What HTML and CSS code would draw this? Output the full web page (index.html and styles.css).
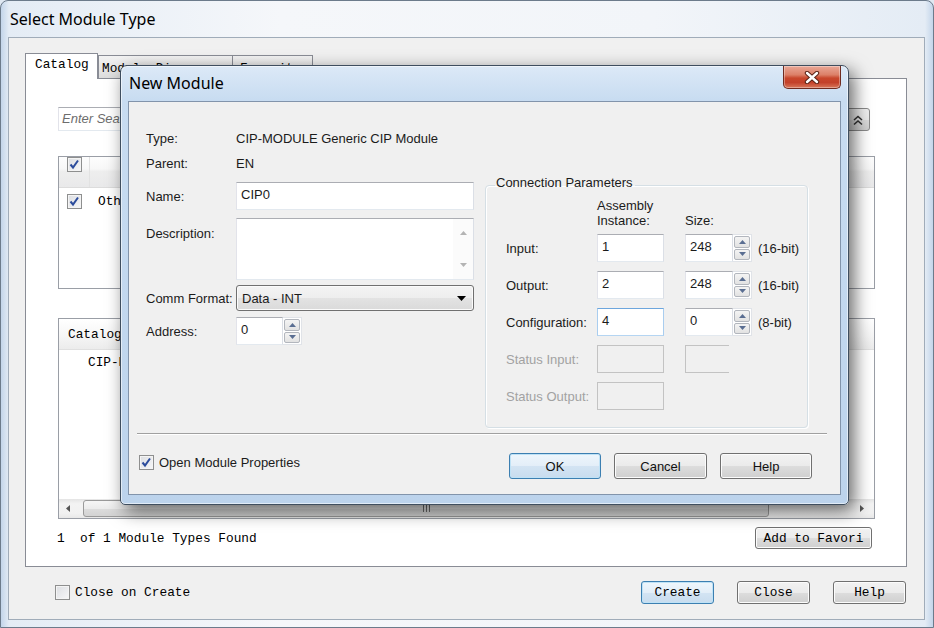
FILE: index.html
```html
<!DOCTYPE html>
<html lang="en">
<head>
<meta charset="utf-8">
<title>Select Module Type</title>
<link rel="stylesheet" href="styles.css">
</head>
<body>
<div class="win">
  <div class="win-title">Select Module Type</div>
  <div class="win-client">
    <div class="tabs">
      <div class="tab tab-on mono">Catalog</div>
      <div class="tab tab-2 mono">Module Discovery</div>
      <div class="tab tab-3 mono">Favorites</div>
    </div>
    <div class="panel">
      <div class="search-row">
        <div class="search-box">Enter Search Text for Module Type...</div>
        <div class="collapse-btn"><svg width="12" height="12" viewBox="0 0 12 12"><path d="M2 6l4-3.5 4 3.5M2 10.5l4-3.5 4 3.5" fill="none" stroke="#333" stroke-width="1.6"/></svg></div>
      </div>
      <div class="list list-filter">
        <div class="lhead lhead-filter">
          <span class="chk"><svg width="13" height="13" viewBox="0 0 13 13"><path d="M2.5 6.5l2.5 3 5-7" fill="none" stroke="#2c4c9c" stroke-width="2"/></svg></span>
          <span class="lhead-div"></span>
        </div>
        <div class="lrow lrow-filter">
          <span class="chk"><svg width="13" height="13" viewBox="0 0 13 13"><path d="M2.5 6.5l2.5 3 5-7" fill="none" stroke="#2c4c9c" stroke-width="2"/></svg></span>
          <span class="mono">Other</span>
        </div>
      </div>
      <div class="list list-cat">
        <div class="lhead lhead-cat mono">Catalog Number</div>
        <div class="lrow lrow-cat mono">CIP-MODULE</div>
        <div class="lfill"></div>
        <div class="hscroll">
          <span class="harrow"><svg width="4" height="7" viewBox="0 0 4 7"><path d="M4 0L0 3.5 4 7z" fill="#555"/></svg></span>
          <span class="hthumb"><span class="grip"></span></span>
          <span class="htrack"></span>
          <span class="harrow harrow-r"><svg width="4" height="7" viewBox="0 0 4 7"><path d="M0 0l4 3.5L0 7z" fill="#555"/></svg></span>
        </div>
      </div>
      <div class="found-row">
        <span class="mono">1  of 1 Module Types Found</span>
        <button class="obtn obtn-fav">Add to Favori</button>
      </div>
    </div>
    <div class="win-foot">
      <div class="ochk"><span class="chk"></span><span class="mono">Close on Create</span></div>
      <div class="obtns">
        <button class="obtn obtn-def">Create</button>
        <button class="obtn">Close</button>
        <button class="obtn">Help</button>
      </div>
    </div>
  </div>
</div>

<div class="dlg">
  <div class="dlg-title">
    <span class="dlg-caption">New Module</span>
    <span class="dlg-close"><svg width="16" height="13" viewBox="0 0 16 13"><path d="M3 2l10 9M13 2L3 11" stroke="#5a2418" stroke-width="4.4" stroke-linecap="round"/><path d="M3 2l10 9M13 2L3 11" stroke="#fff" stroke-width="2.4" stroke-linecap="round"/></svg></span>
  </div>
  <div class="dlg-client">
    <div class="dlg-body">
      <div class="fcol">
        <div class="frow r-type"><span class="lbl">Type:</span><span>CIP-MODULE Generic CIP Module</span></div>
        <div class="frow r-parent"><span class="lbl">Parent:</span><span>EN</span></div>
        <div class="frow r-name"><span class="lbl">Name:</span><span class="tb tb-name">CIP0</span></div>
        <div class="frow r-desc"><span class="lbl">Description:</span>
          <span class="desc"><span class="desc-text"></span><span class="vscroll"><svg width="7" height="4" viewBox="0 0 7 4"><path d="M0 4L3.5 0 7 4z" fill="#b4b4b4"/></svg><svg width="7" height="4" viewBox="0 0 7 4"><path d="M0 0h7L3.5 4z" fill="#b4b4b4"/></svg></span></span>
        </div>
        <div class="frow r-comm"><span class="lbl">Comm Format:</span>
          <span class="combo"><span>Data - INT</span><svg width="9" height="5" viewBox="0 0 9 5"><path d="M0 0h9L4.5 5z" fill="#000"/></svg></span>
        </div>
        <div class="frow r-addr"><span class="lbl">Address:</span>
          <span class="spinbox spinbox-addr"><span class="tb">0</span><span class="spin"><span class="sb"><svg width="7" height="4" viewBox="0 0 7 4"><path d="M0 4L3.5 0 7 4z" fill="#5a6e92"/></svg></span><span class="sb"><svg width="7" height="4" viewBox="0 0 7 4"><path d="M0 0h7L3.5 4z" fill="#5a6e92"/></svg></span></span></span>
        </div>
      </div>
      <fieldset class="conn">
        <legend>Connection Parameters</legend>
        <div class="cgrid">
          <span></span><span class="chead">Assembly<br>Instance:</span><span class="chead chead-size">Size:</span><span></span>

          <span class="clbl">Input:</span><span class="tb tb-inst">1</span>
          <span class="spinbox"><span class="tb">248</span><span class="spin"><span class="sb"><svg width="7" height="4" viewBox="0 0 7 4"><path d="M0 4L3.5 0 7 4z" fill="#5a6e92"/></svg></span><span class="sb"><svg width="7" height="4" viewBox="0 0 7 4"><path d="M0 0h7L3.5 4z" fill="#5a6e92"/></svg></span></span></span>
          <span class="unit">(16-bit)</span>

          <span class="clbl">Output:</span><span class="tb tb-inst">2</span>
          <span class="spinbox"><span class="tb">248</span><span class="spin"><span class="sb"><svg width="7" height="4" viewBox="0 0 7 4"><path d="M0 4L3.5 0 7 4z" fill="#5a6e92"/></svg></span><span class="sb"><svg width="7" height="4" viewBox="0 0 7 4"><path d="M0 0h7L3.5 4z" fill="#5a6e92"/></svg></span></span></span>
          <span class="unit">(16-bit)</span>

          <span class="clbl">Configuration:</span><span class="tb tb-inst tb-focus">4</span>
          <span class="spinbox"><span class="tb">0</span><span class="spin"><span class="sb"><svg width="7" height="4" viewBox="0 0 7 4"><path d="M0 4L3.5 0 7 4z" fill="#5a6e92"/></svg></span><span class="sb"><svg width="7" height="4" viewBox="0 0 7 4"><path d="M0 0h7L3.5 4z" fill="#5a6e92"/></svg></span></span></span>
          <span class="unit">(8-bit)</span>

          <span class="clbl dis">Status Input:</span><span class="tb tb-inst tb-dis"></span>
          <span class="tb tb-dis tb-cut"></span><span></span>

          <span class="clbl dis">Status Output:</span><span class="tb tb-inst tb-dis"></span>
          <span></span><span></span>
        </div>
      </fieldset>
    </div>
    <div class="sep"></div>
    <div class="dlg-foot">
      <div class="dchk"><span class="chk"><svg width="13" height="13" viewBox="0 0 13 13"><path d="M2.5 6.5l2.5 3 5-7" fill="none" stroke="#2c4c9c" stroke-width="2"/></svg></span><span>Open Module Properties</span></div>
      <div class="dbtns">
        <button class="btn btn-def btn-ok">OK</button>
        <button class="btn btn-cancel">Cancel</button>
        <button class="btn btn-help">Help</button>
      </div>
    </div>
  </div>
</div>
</body>
</html>
```

FILE: styles.css
```css
* { box-sizing: border-box; margin: 0; padding: 0; }
html, body { width: 934px; height: 628px; overflow: hidden; }
body {
  position: relative;
  background: #dfe8f2;
  font-family: "Liberation Sans", Arial, sans-serif;
  font-size: 13px;
  color: #1b1b1b;
}
svg { display: block; }
button { font: inherit; color: inherit; }

.mono {
  font-family: "Liberation Mono", "Courier New", monospace;
  font-size: 12.8px;
  color: #000;
  white-space: pre;
}

/* ---------- outer window ---------- */
.win {
  width: 934px;
  height: 628px;
  display: flex;
  flex-direction: column;
  border: 1px solid #6c7b8b;
  border-radius: 8px 8px 0 0;
  background: linear-gradient(90deg, #c3d5ea 0, #e4ecf5 8px, #f5f7fa 30%, #f2f5f9 70%, #e4ecf5 calc(100% - 8px), #c3d5ea 100%);
}
.win-title {
  height: 36px;
  flex: none;
  display: flex;
  align-items: center;
  padding-left: 9px;
  font-family: "Noto Sans", sans-serif;
  font-size: 16px;
  color: #000;
}
.win-client {
  flex: 1;
  margin: 0 8px 7px 7px;
  border: 1px solid #a0acb9;
  background: #f0f0f0;
  padding: 15px 17px 0 16px;
  display: flex;
  flex-direction: column;
}

.tabs {
  height: 25px;
  flex: none;
  display: flex;
  align-items: flex-end;
  position: relative;
  z-index: 1;
}
.tab {
  height: 23px;
  border: 1px solid #898c95;
  border-bottom: none;
  background: linear-gradient(#f3f3f3, #e8e8e8 50%, #dcdcdc);
  line-height: 21px;
  padding: 2px 0 0 3px;
  overflow: hidden;
}
.tab-on {
  width: 73px;
  height: 26px;
  margin-bottom: -1px;
  background: #fff;
  padding: 2px 0 0 9px;
  line-height: 17px;
}
.tab-2 { width: 135px; }
.tab-3 { width: 81px; margin-left: -1px; padding-left: 7px; }

.panel {
  height: 489px;
  flex: none;
  border: 1px solid #898c95;
  background: #fff;
  padding: 28px 31px 0 32px;
  display: flex;
  flex-direction: column;
}
.search-row { height: 24px; display: flex; margin-bottom: 25px; }
.search-box {
  flex: 1;
  border: 1px solid;
  border-color: #abadb3 #dbdfe6 #e3e9ef #e2e3ea;
  padding-left: 3px;
  font-style: italic;
  color: #6d6d6d;
  line-height: 21px;
  white-space: nowrap;
  overflow: hidden;
}
.collapse-btn {
  width: 24px;
  margin: 1px 5px 0 8px;
  border: 1px solid #8a8a8a;
  border-radius: 3px;
  background: linear-gradient(#f2f2f2, #ebebeb 50%, #dddddd 50%, #cfcfcf);
  display: flex;
  align-items: center;
  justify-content: center;
}

.list {
  border: 1px solid #9a9ea6;
  background: #fff;
  display: flex;
  flex-direction: column;
  flex: none;
}
.list-filter { height: 133px; margin-bottom: 29px; }
.lhead-filter {
  height: 31px;
  padding-left: 8px;
  display: flex;
  align-items: flex-start;
  background: linear-gradient(#fdfdfd 0, #f7f7f7 40%, #eeeeee 48%, #e9e9ea 100%);
  border-bottom: 1px solid #dcdcdc;
}
.lhead-div { width: 1px; height: 30px; margin-left: 7px; background: #e2e2e2; }
.lrow-filter { height: 26px; display: flex; align-items: center; gap: 16px; padding-left: 8px; }

.list-cat { height: 201px; }
.lhead-cat {
  height: 31px;
  line-height: 32px;
  padding-left: 9px;
  background: linear-gradient(#fff, #f7f7f7 50%, #ececec);
  border-bottom: 1px solid #e0e0e0;
}
.lrow-cat { height: 25px; line-height: 25px; padding-left: 29px; }
.lfill { flex: 1; }
.hscroll {
  height: 19px;
  flex: none;
  display: flex;
  background: linear-gradient(#e4e4e4, #f3f3f3 25%, #f1f1f1 75%, #e8e8e8);
}
.harrow { width: 17px; display: flex; align-items: center; justify-content: center; }
.harrow-r { margin-right: 4px; }
.hthumb {
  width: 686px;
  margin: 1px 0 1px 7px;
  border: 1px solid #9a9a9a;
  border-radius: 3px;
  background: linear-gradient(#f6f6f6, #ececec 50%, #dddddd 51%, #d3d3d3);
  display: flex;
  align-items: center;
  justify-content: center;
}
.grip {
  width: 7px;
  height: 7px;
  background: repeating-linear-gradient(90deg, #6d6d6d 0 1px, transparent 1px 3px);
}
.htrack { flex: 1; }

.found-row {
  margin: 8px 3px 0 -1px;
  height: 22px;
  display: flex;
  align-items: center;
  justify-content: space-between;
}

.obtn {
  font-family: "Liberation Mono", "Courier New", monospace;
  font-size: 12.8px;
  height: 23px;
  width: 73px;
  border: 1px solid #707070;
  border-radius: 3px;
  background: linear-gradient(#f2f2f2 0, #ebebeb 50%, #dddddd 50%, #cfcfcf 100%);
  box-shadow: inset 0 0 0 1px #fcfcfc;
  color: #000;
}
.obtn-fav { width: 117px; height: 22px; }
.obtn-def {
  border-color: #3c7fb1;
  box-shadow: inset 0 0 0 1px #bfe2f6;
  background: linear-gradient(#eef6fc 0, #e3eef8 50%, #d3e4f3 50%, #c8dcee 100%);
}

.win-foot {
  padding-top: 14px;
  display: flex;
  align-items: flex-start;
  justify-content: space-between;
}
.ochk { display: flex; align-items: center; gap: 5px; margin: 4px 0 0 30px; }
.obtns { display: flex; gap: 23px; margin-right: 1px; }

/* checkbox */
.chk {
  width: 15px;
  height: 15px;
  flex: none;
  border: 1px solid #8e8f8f;
  background: linear-gradient(135deg, #dcdee2, #f7f7f8);
  box-shadow: inset 0 0 0 1px #f4f4f4;
  display: flex;
  align-items: center;
  justify-content: center;
}

/* ---------- New Module dialog ---------- */
.dlg {
  position: absolute;
  left: 120px;
  top: 65px;
  width: 729px;
  height: 440px;
  z-index: 5;
  border: 1px solid #3f4e5f;
  border-radius: 7px 7px 5px 5px;
  background: linear-gradient(#dce9f7 0, #c8dcf1 34px, #bcd3ec 100%);
  box-shadow: inset 0 0 0 1px rgba(255, 255, 255, .55), 5px 6px 18px rgba(0, 0, 0, .6);
  padding: 0 7px 9px 7px;
  display: flex;
  flex-direction: column;
}
.dlg-title { height: 35px; flex: none; display: flex; }
.dlg-caption {
  align-self: center;
  padding: 0 0 1px 1px;
  font-family: "Noto Sans", sans-serif;
  font-size: 16px;
  color: #000;
}
.dlg-close {
  width: 58px;
  height: 23px;
  margin-left: auto;
  border: 1px solid #6f2b20;
  border-top: none;
  border-radius: 0 0 5px 5px;
  background: linear-gradient(#e9a897 0, #dc8068 40%, #c8472c 55%, #c3412a 75%, #d8775a 100%);
  box-shadow: inset 0 0 0 1px rgba(255, 255, 255, .35);
  display: flex;
  align-items: center;
  justify-content: center;
}
.dlg-client {
  flex: 1;
  border: 1px solid #8294ab;
  background: #f0f0f0;
  padding: 27px 28px 0 17px;
  display: flex;
  flex-direction: column;
}
.dlg-body { height: 304px; flex: none; display: flex; align-items: flex-start; }

.fcol { width: 328px; flex: none; margin-right: 11px; }
.frow { display: flex; align-items: center; }
.lbl { width: 90px; flex: none; }
.r-type { height: 18px; }
.r-parent { height: 18px; margin-top: 7px; }
.r-name { height: 28px; margin-top: 10px; }
.r-desc { height: 62px; margin-top: 8px; align-items: flex-start; }
.r-desc .lbl { padding-top: 8px; }
.r-comm { height: 26px; margin-top: 5px; }
.r-addr { height: 28px; margin-top: 6px; }

.tb {
  height: 28px;
  background: #fff;
  border: 1px solid;
  border-color: #abadb3 #dbdfe6 #e3e9ef #e2e3ea;
  padding: 4px 0 0 4px;
  line-height: 16px;
}
.tb-name { width: 238px; }
.desc {
  width: 238px;
  height: 62px;
  display: flex;
  background: #fff;
  border: 1px solid;
  border-color: #abadb3 #dbdfe6 #e3e9ef #e2e3ea;
}
.desc-text { flex: 1; }
.vscroll {
  width: 20px;
  display: flex;
  flex-direction: column;
  align-items: center;
  justify-content: space-between;
  padding: 12px 0 12px;
  background: #fbfbfb;
}
.combo {
  width: 238px;
  height: 26px;
  border: 1px solid #707070;
  border-radius: 3px;
  background: linear-gradient(#f4f4f4, #eeeeee 50%, #e3e3e3 50%, #dadada);
  box-shadow: inset 0 0 0 1px #fbfbfb;
  display: flex;
  align-items: center;
  justify-content: space-between;
  padding: 0 7px 0 5px;
}
.spinbox { display: flex; height: 28px; width: 67px; }
.spinbox .tb { flex: 1; }
.spinbox-addr { width: 66px; }
.spin {
  width: 19px;
  flex: none;
  display: flex;
  flex-direction: column;
  background: #fff;
  border: 1px solid #e0e3e8;
  border-left: none;
  padding: 1px;
  gap: 1px;
}
.sb {
  flex: 1;
  border: 1px solid #b2b6bd;
  border-radius: 2px;
  background: linear-gradient(#f4f4f4, #e2e2e2);
  display: flex;
  align-items: center;
  justify-content: center;
}

.conn {
  width: 323px;
  height: 252px;
  min-width: 0;
  margin-top: 47px;
  border: 1px solid #d5dfe5;
  border-radius: 4px;
  box-shadow: inset 1px 1px 0 #fff, 1px 1px 0 #fff;
  padding: 0 0 0 20px;
}
.conn legend {
  margin-left: -11px;
  padding: 0 2px 4px 1px;
  line-height: 14px;
  font-size: 13px;
}
.cgrid {
  margin-top: 4px;
  display: grid;
  grid-template-columns: 91px 88px 73px auto;
  grid-template-rows: 27px repeat(5, 28px);
  row-gap: 9px;
  align-items: center;
}
.chead { align-self: start; line-height: 15px; }
.chead-size { padding-top: 15px; }
.tb-inst { width: 67px; }
.tb-focus { border-color: #6da6dd #a9cdef #b5d5f2 #a9cdef; }
.tb-dis { background: transparent; border-color: #c3c3c3; }
.tb-cut { width: 44px; border-right: none; }
.dis { color: #a2a2a2; }
.unit { white-space: nowrap; }

.sep {
  height: 2px;
  flex: none;
  margin: 0 -15px 0 -9px;
  border-top: 1px solid #a0a0a0;
  border-bottom: 1px solid #fff;
}
.dlg-foot {
  margin-top: 18px;
  height: 26px;
  display: flex;
  align-items: flex-start;
  justify-content: space-between;
}
.dchk { display: flex; align-items: center; gap: 5px; margin: 2px 0 0 -7px; }
.dbtns { display: flex; gap: 13px; }
.btn {
  height: 26px;
  border: 1px solid #707070;
  border-radius: 3px;
  background: linear-gradient(#f2f2f2 0, #ebebeb 50%, #dddddd 50%, #cfcfcf 100%);
  box-shadow: inset 0 0 0 1px #fcfcfc;
  font-family: "Liberation Sans", Arial, sans-serif;
  font-size: 13px;
  color: #111;
}
.btn-ok { width: 92px; }
.btn-cancel { width: 93px; }
.btn-help { width: 92px; }
.btn-def {
  border-color: #3c7fb1;
  box-shadow: inset 0 0 0 1px #bfe2f6;
  background: linear-gradient(#eef6fc 0, #e3eef8 50%, #d3e4f3 50%, #c8dcee 100%);
}
```
